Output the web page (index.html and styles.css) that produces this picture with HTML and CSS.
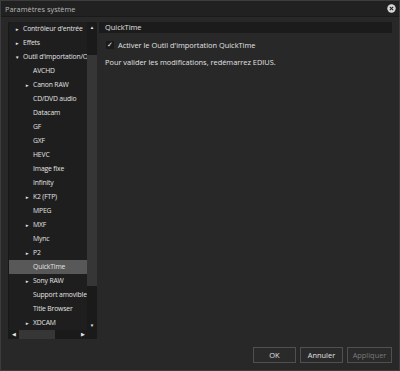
FILE: index.html
```html
<!DOCTYPE html>
<html lang="fr">
<head>
    <meta charset="UTF-8">
    <title>Paramètres système</title>
    <link rel="stylesheet" href="styles.css">
</head>
<body>
    <div class="window">
        <!-- Title bar -->
        <div class="titlebar">
            <span class="title">Paramètres système</span>
            <span class="close-btn">
                <svg width="9" height="9" viewBox="0 0 9 9">
                    <circle cx="4.5" cy="4.5" r="4.2" fill="#d8d8d8"/>
                    <path d="M2.8 2.8 L6.2 6.2 M6.2 2.8 L2.8 6.2" stroke="#222" stroke-width="1.1"/>
                </svg>
            </span>
        </div>

        <div class="content">
            <!-- Tree -->
            <div class="tree-panel">
                <div class="tree-main">
                    <ul class="tree-list">
                        <li class="row"><span class="arrow">&#9658;</span>Contrôleur d'entrée</li>
                        <li class="row"><span class="arrow">&#9658;</span>Effets</li>
                        <li class="row"><span class="arrow down">&#9660;</span>Outil d'importation/Outil d'exportation</li>
                        <li class="row sub"><span class="arrow"></span>AVCHD</li>
                        <li class="row sub"><span class="arrow">&#9658;</span>Canon RAW</li>
                        <li class="row sub"><span class="arrow"></span>CD/DVD audio</li>
                        <li class="row sub"><span class="arrow"></span>Datacam</li>
                        <li class="row sub"><span class="arrow"></span>GF</li>
                        <li class="row sub"><span class="arrow"></span>GXF</li>
                        <li class="row sub"><span class="arrow"></span>HEVC</li>
                        <li class="row sub"><span class="arrow"></span>Image fixe</li>
                        <li class="row sub"><span class="arrow"></span>Infinity</li>
                        <li class="row sub"><span class="arrow">&#9658;</span>K2 (FTP)</li>
                        <li class="row sub"><span class="arrow"></span>MPEG</li>
                        <li class="row sub"><span class="arrow">&#9658;</span>MXF</li>
                        <li class="row sub"><span class="arrow"></span>Mync</li>
                        <li class="row sub"><span class="arrow">&#9658;</span>P2</li>
                        <li class="row sub selected"><span class="arrow"></span>QuickTime</li>
                        <li class="row sub"><span class="arrow">&#9658;</span>Sony RAW</li>
                        <li class="row sub"><span class="arrow"></span>Support amovible</li>
                        <li class="row sub"><span class="arrow"></span>Title Browser</li>
                        <li class="row sub"><span class="arrow">&#9658;</span>XDCAM</li>
                    </ul>
                    <div class="vscroll">
                        <span class="sb-arrow">&#9650;</span>
                        <div class="vtrack"><div class="vthumb"></div></div>
                        <span class="sb-arrow">&#9660;</span>
                    </div>
                </div>
                <div class="hscroll-row">
                    <div class="hscroll">
                        <span class="sb-arrow">&#9664;</span>
                        <div class="htrack"><div class="hthumb"></div></div>
                        <span class="sb-arrow">&#9654;</span>
                    </div>
                    <div class="corner"></div>
                </div>
            </div>

            <!-- Settings -->
            <div class="settings-panel">
                <div class="section-header">QuickTime</div>
                <label class="check-row">
                    <span class="checkbox">&#10003;</span>
                    <span>Activer le Outil d'importation QuickTime</span>
                </label>
                <p class="note">Pour valider les modifications, redémarrez EDIUS.</p>
            </div>
        </div>

        <!-- Buttons -->
        <div class="footer">
            <button class="btn">OK</button>
            <button class="btn">Annuler</button>
            <button class="btn disabled">Appliquer</button>
        </div>
    </div>
</body>
</html>
```

FILE: styles.css
```css
/* Base */
body {
    margin: 0;
    background: #2a2a2a;
    font-family: "Open Sans", "Noto Sans", sans-serif;
    font-size: 7.4px;
    line-height: 10px;
    color: #e2e2e2;
}

.window {
    width: 400px;
    height: 371px;
    box-sizing: border-box;
    border: 1px solid #3c3c3c;
    background: #282828;
    display: flex;
    flex-direction: column;
}

/* Title bar */
.titlebar {
    height: 15px;
    flex: none;
    display: flex;
    align-items: center;
    justify-content: space-between;
    padding: 0 3px 0 4px;
    background: #212121;
    border-bottom: 1px solid #1a1a1a;
    color: #b8b8b8;
}

.close-btn {
    display: flex;
}

/* Main area */
.content {
    flex: 1;
    display: flex;
    gap: 2px;
    padding: 5px 7px 0 7px;
    min-height: 0;
}

/* Tree */
.tree-panel {
    width: 88px;
    height: 317px;
    flex: none;
    display: flex;
    flex-direction: column;
    background: #1e1e1e;
    border-left: 1px solid #181818;
    font-size: 6.8px;
    letter-spacing: -0.15px;
}

.tree-main {
    flex: 1;
    display: flex;
    min-height: 0;
}

.tree-list {
    list-style: none;
    margin: 0;
    padding: 0;
    flex: 1;
    overflow: hidden;
}

.row {
    height: 14px;
    display: flex;
    align-items: center;
    white-space: nowrap;
    padding-left: 4px;
}

.row.sub {
    padding-left: 14px;
}

.row.selected {
    background: #585858;
}

.arrow {
    width: 10px;
    flex: none;
    font-size: 4.5px;
    color: #e6e6e6;
    padding-left: 2px;
    box-sizing: border-box;
}

/* Scrollbars */
.vscroll {
    width: 10px;
    flex: none;
    display: flex;
    flex-direction: column;
    align-items: center;
    background: #1a1a1a;
}

.sb-arrow {
    font-size: 4.5px;
    color: #e6e6e6;
    height: 10px;
    line-height: 10px;
    flex: none;
    text-align: center;
}

.vtrack {
    flex: 1;
    width: 10px;
    padding-top: 23px;
    padding-bottom: 34px;
    box-sizing: border-box;
    display: flex;
}

.vthumb {
    flex: 1;
    background: #363636;
}

.hscroll-row {
    height: 9px;
    flex: none;
    display: flex;
}

.hscroll {
    flex: 1;
    display: flex;
    align-items: center;
    background: #1a1a1a;
}

.hscroll .sb-arrow {
    width: 9px;
    height: 9px;
    line-height: 9px;
}

.htrack {
    flex: 1;
    height: 9px;
    display: flex;
}

.hthumb {
    width: 36px;
    margin-left: 1px;
    background: #363636;
}

.corner {
    width: 10px;
    background: #1a1a1a;
}

/* Settings */
.settings-panel {
    flex: 1;
}

.section-header {
    height: 11px;
    line-height: 11px;
    padding-left: 6px;
    background: #1b1b1b;
    color: #e0e0e0;
}

.check-row {
    display: flex;
    align-items: center;
    gap: 4px;
    height: 10px;
    margin: 7px 0 0 7px;
}

.checkbox {
    width: 8px;
    height: 8px;
    line-height: 8px;
    display: flex;
    align-items: center;
    justify-content: center;
    background: #1a1a1a;
    color: #eee;
    font-size: 7px;
}

.note {
    margin: 7px 0 0 6px;
}

/* Footer */
.footer {
    height: 31px;
    flex: none;
    display: flex;
    justify-content: flex-end;
    align-items: flex-start;
    gap: 4px;
    padding: 8px 7px 0 0;
    box-sizing: border-box;
}

.btn {
    width: 43px;
    height: 16px;
    background: #2a2a2a;
    border: 1px solid #505050;
    color: #e0e0e0;
    font-family: "Open Sans", "Noto Sans", sans-serif;
    font-size: 7.4px;
    padding: 0;
}

.btn.disabled {
    color: #7a7a7a;
    width: 45px;
}
```
